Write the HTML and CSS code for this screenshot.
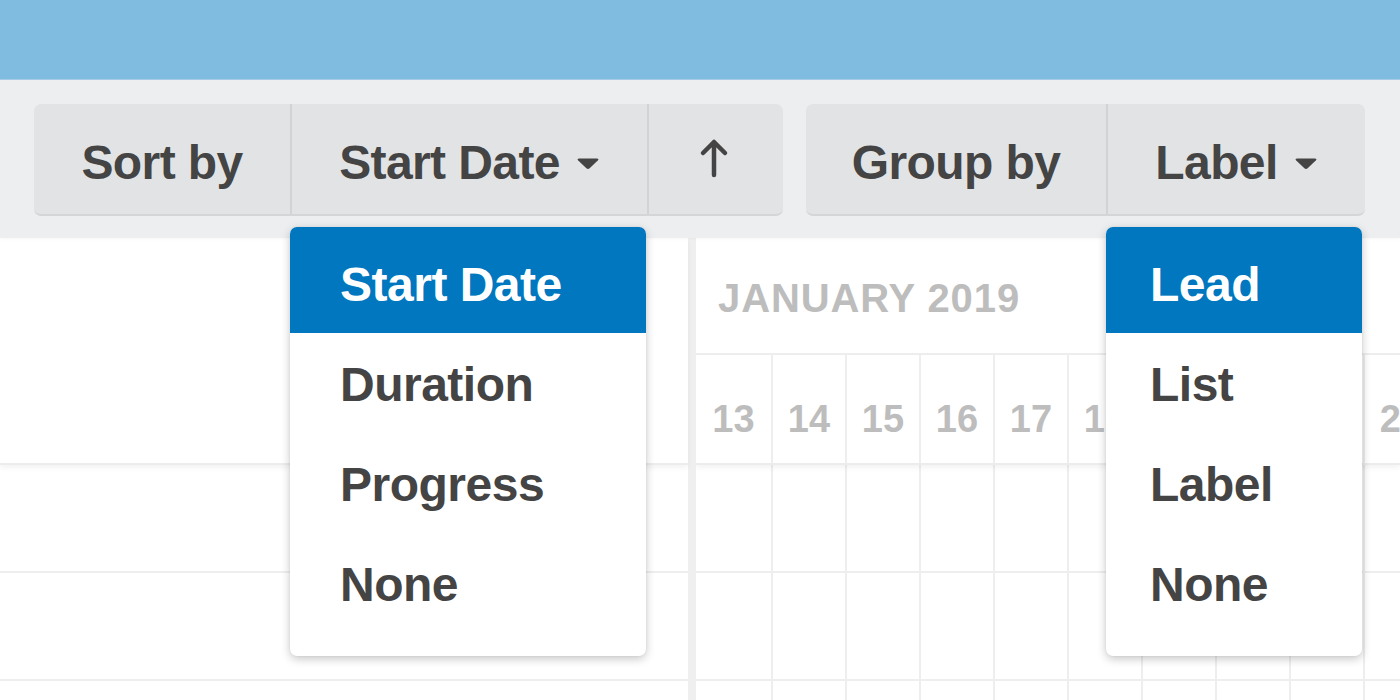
FILE: index.html
```html
<!DOCTYPE html>
<html lang="en">
<head>
<meta charset="utf-8">
<title>Sort and group</title>
<link rel="stylesheet" href="styles.css">
</head>
<body>
<header class="topbar"></header>
<div class="toolbar">
  <div class="btn-group">
    <div class="seg seg-sortby">Sort by</div>
    <div class="seg seg-sortfield">Start Date<svg class="caret" viewBox="0 0 24 13" width="24" height="13"><path d="M3 1.5 H21 Q23.5 1.5 21.8 3.4 L13.6 11.2 Q12 12.6 10.4 11.2 L2.2 3.4 Q0.5 1.5 3 1.5 Z" fill="#444"/></svg>
      <div class="menu menu-sort">
        <div class="menu-item active">Start Date</div>
        <div class="menu-item">Duration</div>
        <div class="menu-item">Progress</div>
        <div class="menu-item">None</div>
      </div>
    </div>
    <div class="seg seg-dir"><svg class="arrow" viewBox="0 0 30 40" width="30" height="40"><path d="M15 37 V4 M4 15 L15 4 L26 15" fill="none" stroke="#444" stroke-width="4.5" stroke-linecap="round" stroke-linejoin="round"/></svg></div>
  </div>
  <div class="btn-group">
    <div class="seg seg-groupby">Group by</div>
    <div class="seg seg-groupfield">Label<svg class="caret" viewBox="0 0 24 13" width="24" height="13"><path d="M3 1.5 H21 Q23.5 1.5 21.8 3.4 L13.6 11.2 Q12 12.6 10.4 11.2 L2.2 3.4 Q0.5 1.5 3 1.5 Z" fill="#444"/></svg>
      <div class="menu menu-group">
        <div class="menu-item active">Lead</div>
        <div class="menu-item">List</div>
        <div class="menu-item">Label</div>
        <div class="menu-item">None</div>
      </div>
    </div>
  </div>
</div>
<main class="content">
  <section class="left-pane">
    <div class="left-head"></div>
    <div class="left-row"></div>
    <div class="left-row"></div>
    <div class="left-row"></div>
  </section>
  <div class="divider"></div>
  <section class="right-pane">
    <div class="month-row">JANUARY 2019</div>
    <div class="grid-row days-row">
      <div class="cell">13</div><div class="cell">14</div><div class="cell">15</div><div class="cell">16</div><div class="cell">17</div><div class="cell">18</div><div class="cell">19</div><div class="cell">20</div><div class="cell">21</div><div class="cell">22</div>
    </div>
    <div class="grid-row body-row">
      <div class="cell"></div><div class="cell"></div><div class="cell"></div><div class="cell"></div><div class="cell"></div><div class="cell"></div><div class="cell"></div><div class="cell"></div><div class="cell"></div><div class="cell"></div>
    </div>
    <div class="grid-row body-row">
      <div class="cell"></div><div class="cell"></div><div class="cell"></div><div class="cell"></div><div class="cell"></div><div class="cell"></div><div class="cell"></div><div class="cell"></div><div class="cell"></div><div class="cell"></div>
    </div>
    <div class="grid-row body-row">
      <div class="cell"></div><div class="cell"></div><div class="cell"></div><div class="cell"></div><div class="cell"></div><div class="cell"></div><div class="cell"></div><div class="cell"></div><div class="cell"></div><div class="cell"></div>
    </div>
  </section>
</main>
</body>
</html>
```
FILE: styles.css
```css
* { box-sizing: border-box; }
html, body {
  margin: 0;
  padding: 0;
  width: 1400px;
  height: 700px;
  overflow: hidden;
  background: #ffffff;
  font-family: "Liberation Sans", Arial, Helvetica, sans-serif;
  font-weight: 700;
  color: #444444;
}
.topbar {
  height: 80px;
  background: #80bbe0;
  border-bottom: 1px solid #a6cce8;
}
.toolbar {
  height: 158px;
  background: #edeef0;
  padding: 24px 0 0 34px;
  display: flex;
  gap: 23px;
  align-items: flex-start;
  position: relative;
  z-index: 2;
  box-shadow: 0 1px 3px rgba(0,0,0,0.04);
}
.btn-group {
  display: flex;
  height: 112px;
  background: #e2e3e5;
  border-radius: 7px;
  border-bottom: 2px solid #d4d5d7;
}
.seg {
  position: relative;
  display: flex;
  align-items: center;
  justify-content: center;
  font-size: 48px;
  letter-spacing: -0.6px;
  line-height: 1;
  padding-top: 7px;
}
.seg + .seg { border-left: 2px solid #d2d3d5; }
.seg-sortby { width: 256px; }
.seg-sortfield { width: 357px; }
.seg-dir { width: 136px; padding-top: 2px; }
.seg-groupby { width: 300px; }
.seg-groupfield { width: 259px; }
.caret { margin-left: 16px; margin-top: 2px; flex: none; }
.arrow { display: block; margin-top: -4px; margin-left: -4px; }

.menu {
  position: absolute;
  top: 123px;
  left: -2px;
  background: #ffffff;
  border-radius: 7px;
  overflow: hidden;
  box-shadow: 0 3px 10px rgba(0,0,0,0.22), 0 0 2px rgba(0,0,0,0.08);
  padding-bottom: 23px;
  z-index: 5;
  letter-spacing: -0.5px;
}
.menu-sort { width: 356px; }
.menu-group { width: 256px; }
.menu-item {
  padding: 3px 0 0 50px;
  line-height: 97px;
  height: 100px;
  font-size: 48px;
  color: #444444;
  white-space: nowrap;
}
.menu-group .menu-item { padding-left: 44px; }
.menu-item.active {
  background: #0077be;
  color: #ffffff;
  padding-top: 9px;
  height: 106px;
}

.content {
  display: flex;
  height: 462px;
  overflow: hidden;
}
.left-pane { width: 688px; flex: none; }
.left-head {
  height: 227px;
  border-bottom: 2px solid #ececec;
  box-shadow: 0 3px 5px rgba(0,0,0,0.05);
  position: relative;
}
.left-row {
  height: 108px;
  border-bottom: 2px solid #eeeeee;
}
.divider {
  width: 8px;
  flex: none;
  background: #efefef;
}
.right-pane {
  flex: 1;
  overflow: hidden;
}
.month-row {
  height: 117px;
  border-bottom: 2px solid #eeeeee;
  display: flex;
  align-items: center;
  padding: 5px 0 0 22px;
  font-size: 40px;
  letter-spacing: 0.9px;
  color: #bdbdbd;
}
.grid-row {
  display: grid;
  grid-template-columns: 77px repeat(9, 74px);
}
.cell {
  border-right: 2px solid #eeeeee;
}
.days-row {
  height: 110px;
  border-bottom: 2px solid #ececec;
  box-shadow: 0 3px 5px rgba(0,0,0,0.05);
  position: relative;
}
.days-row .cell {
  display: flex;
  align-items: center;
  justify-content: center;
  padding-top: 20px;
  font-size: 38px;
  color: #bdbdbd;
}
.body-row {
  height: 108px;
  border-bottom: 2px solid #eeeeee;
}
```
